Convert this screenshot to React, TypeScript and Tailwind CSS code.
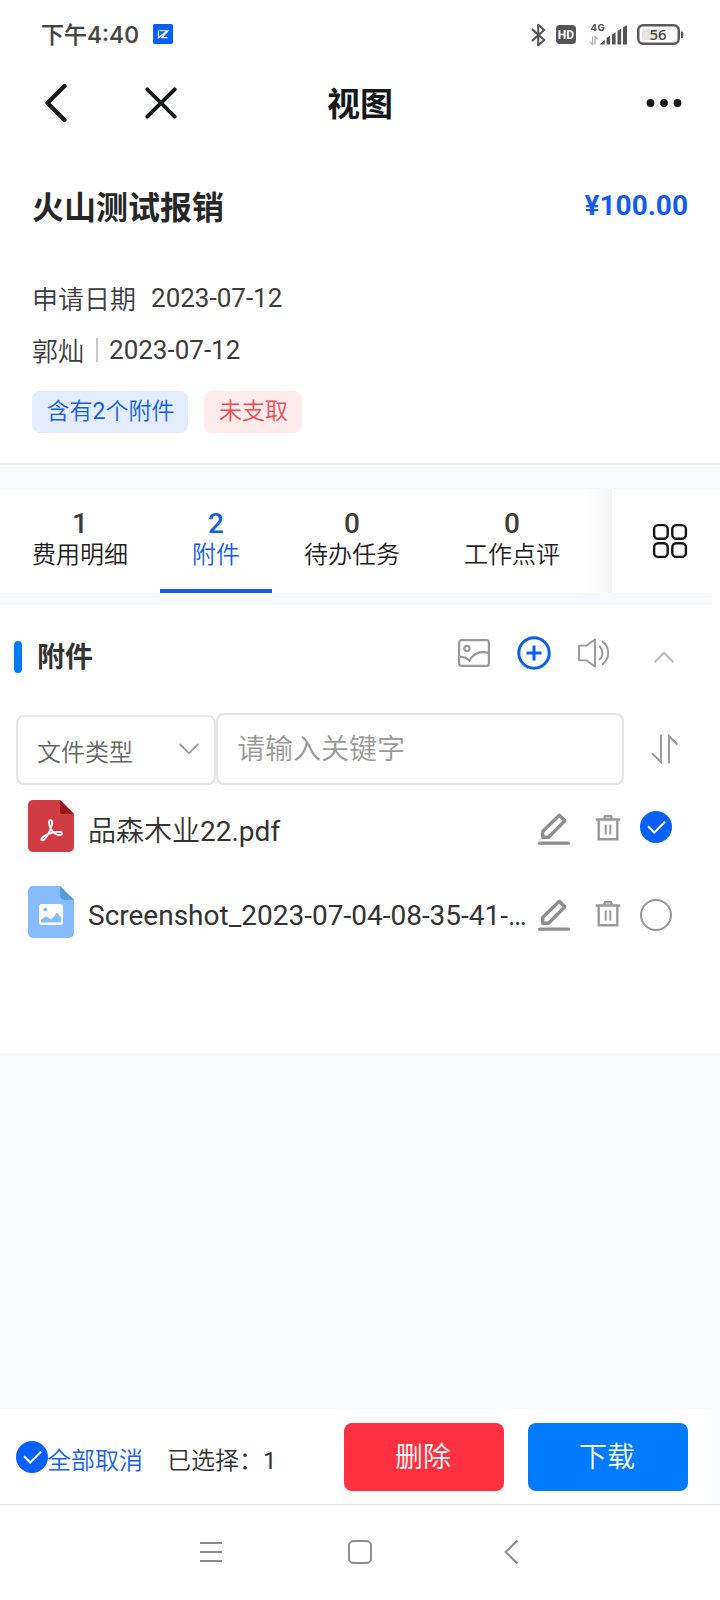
import type { ReactNode } from "react";

function BluetoothIcon() {
  return (
    <svg width="16" height="24" viewBox="0 0 16 24" fill="none" stroke="#555" strokeWidth="2.1" strokeLinejoin="round" strokeLinecap="round">
      <path d="M1.6 6.6 13.2 17 7.2 22.200V1.800L13.200 7 1.6 17.4" />
    </svg>
  );
}

function SignalIcon() {
  return (
    <svg width="40" height="26" viewBox="0 -2 40 26">
      <text x="1.5" y="7.6" fontSize="9.5" fontWeight="700" fill="#4a4a4a" fontFamily="Inter, sans-serif" letterSpacing="0.6">4G</text>
      <g stroke="#b0b0b0" strokeWidth="1.3" fill="none">
        <path d="M3.6 13.5v8L.7 18.6M6 21.5v-8l2.6 2.8" />
      </g>
      <g fill="#555">
        <path d="M10.5 21.500 15.700 17v4.500zM17.500 15l3.600-2.400v8.900h-3.600zM23 11.600l3.600-2.200v12.100H23zM28.500 8l3.600-2.400v15.900h-3.600zM34 4.600l4-2.600v19.500h-4z" />
      </g>
    </svg>
  );
}

function BatteryIcon() {
  return (
    <svg width="47" height="22" viewBox="0 0 47 22">
      <rect x="1.250" y="1.250" width="40.500" height="18.500" rx="5" fill="#fff" stroke="#5a5a5a" strokeWidth="2.500" />
      <rect x="5" y="5" width="19" height="11" rx="2" fill="#e4e4e4" />
      <path d="M44 7.500h.800a1.500 1.500 0 0 1 1.500 1.500v3.500a1.500 1.500 0 0 1-1.500 1.500H44z" fill="#5a5a5a" />
      <text x="21" y="15.800" fontSize="15" fontWeight="500" fill="#444" textAnchor="middle" fontFamily="Noto Sans, sans-serif">56</text>
    </svg>
  );
}

function AppBadge() {
  return (
    <svg width="20" height="20" viewBox="0 0 20 20">
      <rect width="20" height="20" rx="1.5" fill="#0a60ff" />
      <path d="M6.500 6.700h8.500L9 13.600h5.500M5.400 6.500v7.300l8-6.300M8.300 13.600l5.500-5.500" fill="none" stroke="#fff" strokeWidth="1.100" />
    </svg>
  );
}

function ImageIcon() {
  return (
    <svg width="32" height="28" viewBox="0 0 32 28" fill="none" stroke="#999" strokeWidth="2.200">
      <rect x="1.100" y="1.100" width="29.800" height="25.800" rx="2.500" />
      <circle cx="9" cy="9.400" r="2.600" />
      <path d="M1 17.800c4-.4 7 .4 10.300 3.800C15.500 14.500 22 11.500 31 14" />
    </svg>
  );
}

function PlusIcon() {
  return (
    <svg width="34" height="34" viewBox="0 0 34 34" fill="none" stroke="#0f5df0" strokeWidth="3">
      <circle cx="17" cy="17" r="15.200" />
      <path d="M17 9.500v15M9.500 17h15" />
    </svg>
  );
}

function SpeakerIcon() {
  return (
    <svg width="32" height="30" viewBox="0 0 32 30" fill="none" stroke="#999" strokeWidth="1.900">
      <path d="M1 7.600h7.500L17 1.500v27l-8.500-6.100H1z" strokeLinejoin="round" />
      <path d="M21.200 8.200c4.200 3 4.200 10.600 0 13.600M24 3.400c8.200 5 8.200 18.200 0 23.200" />
    </svg>
  );
}

function PencilIcon() {
  return (
    <svg width="32" height="32" viewBox="0 0 32 32" fill="none" stroke="#8e8e8e">
      <path d="M21.300 2.200 26.800 7.700 10.500 24.200H4.700V18.500Z" strokeWidth="3.400" strokeLinejoin="round" />
      <path d="M1.600 30.200h28.800" strokeWidth="3.200" strokeLinecap="round" />
    </svg>
  );
}

function TrashIcon() {
  return (
    <svg width="26" height="26" viewBox="0 0 26 26" fill="none" stroke="#999" strokeWidth="2.400">
      <path d="M.700 4.500h24.600M3.700 4.500v19.800h18.600V4.500M9 4.500l1-3.200h6l1 3.200" />
      <path d="M10.700 9.500v10M15.300 9.500v10" strokeWidth="2" />
    </svg>
  );
}

function CheckCircle() {
  return (
    <svg width="32" height="32" viewBox="0 0 32 32">
      <circle cx="16" cy="16" r="16" fill="#0560ff" />
      <path d="M8 15.300 14.200 21.500 25 10.800" fill="none" stroke="#fff" strokeWidth="2" />
    </svg>
  );
}

function EmptyCircle() {
  return (
    <svg width="32" height="32" viewBox="0 0 32 32">
      <circle cx="16" cy="16" r="15" fill="none" stroke="#969696" strokeWidth="2" />
    </svg>
  );
}

function PdfFile() {
  return (
    <svg width="46" height="52" viewBox="0 0 46 52">
      <path d="M5 0h27l14 14v33a5 5 0 0 1-5 5H5a5 5 0 0 1-5-5V5a5 5 0 0 1 5-5z" fill="#d13b43" />
      <path d="M32 0l14 14H34a2 2 0 0 1-2-2z" fill="#9b1419" />
      <path d="M22.700 20.200c-2.700 0-1.900 5 .200 8.800 2.200 4 6 6.200 9 6 2.700-.2 2.800-2.800 0-3.100-4.600-.4-11 1.600-15.300 4-3.600 2-3.900 4.700-2.200 4.500 2.600-.4 6.700-7.400 8.500-12.200 1.300-3.700 2-8-.200-8z" fill="none" stroke="#fff" strokeWidth="1.900" />
    </svg>
  );
}

function PictureFile() {
  return (
    <svg width="46" height="52" viewBox="0 0 46 52">
      <path d="M5 0h27l14 14v33a5 5 0 0 1-5 5H5a5 5 0 0 1-5-5V5a5 5 0 0 1 5-5z" fill="#86bcff" />
      <path d="M32 0l14 14H37a5 5 0 0 1-5-5z" fill="#529ddd" />
      <rect x="11" y="18" width="24" height="21" rx="2.500" fill="#fff" />
      <circle cx="17.300" cy="23.500" r="1.900" fill="#86bcff" />
      <path d="M13 36.500v-3l5-3.300 5.200 3.400 5.800-7 4 4.200v5.700z" fill="#86bcff" />
    </svg>
  );
}

function Tab({ count, label, active }: { count: number; label: string; active?: boolean }) {
  return (
    <div className={active ? "relative flex h-full shrink-0 flex-col items-center px-8 pt-[19px] text-[#125de6]" : "flex h-full shrink-0 flex-col items-center px-8 pt-[19px] text-[#1c1c1c]"}>
      <span className={active ? "text-[28px] leading-[32px] font-medium" : "text-[28px] leading-[32px] font-medium text-[#3c3c3c]"}>{count}</span>
      <span className="mt-px text-2xl leading-[28px] font-[350]">{label}</span>
      {active && <span className="absolute bottom-0 left-0 h-1 w-full bg-[#125de0]" />}
    </div>
  );
}

function FileRow({ icon, name, check, nameClass, checkClass }: { icon: ReactNode; name: ReactNode; check: ReactNode; nameClass: string; checkClass: string }) {
  return (
    <div className="flex h-[86px] items-start pl-7">
      {icon}
      <span className={nameClass}>{name}</span>
      <div className="mt-[13px] ml-[10px] flex items-start">
        <PencilIcon />
        <span className="mt-[2px] ml-[25px]"><TrashIcon /></span>
        <span className={checkClass}>{check}</span>
      </div>
    </div>
  );
}

export default function App() {
  return (
    <div className="flex h-[1600px] w-[720px] flex-col overflow-hidden bg-white font-['Roboto','Noto_Sans_CJK_SC',sans-serif] [&_svg]:block [&_svg]:shrink-0">
      <div className="flex h-[69px] items-center pr-[36px] pl-[41px]">
        <span className="font-['Inter','Noto_Sans_CJK_SC',sans-serif] text-[23px] leading-[32px] font-medium text-[#444] [-webkit-text-stroke:0.2px_#444]">下午4:40</span>
        <span className="ml-[14px] mb-px"><AppBadge /></span>
        <div className="ml-auto flex items-center">
          <BluetoothIcon />
          <span className="ml-[9px] flex h-[19px] w-[20px] items-center justify-center rounded bg-[#555] text-[12px] font-bold text-white">HD</span>
          <span className="mb-[2px] ml-[13px]"><SignalIcon /></span>
          <span className="ml-[8px]"><BatteryIcon /></span>
        </div>
      </div>

      <div className="flex h-[69px] items-center pr-[38px] pb-[2px] pl-[45px]">
        <svg width="22" height="38" viewBox="0 0 22 38" fill="none" stroke="#16191c" strokeWidth="4.200" strokeLinecap="round" strokeLinejoin="round">
          <path d="M19.500 2.100 2.500 19 19.500 35.900" />
        </svg>
        <svg className="ml-[78px]" width="32" height="32" viewBox="0 0 32 32" fill="none" stroke="#16191c" strokeWidth="3.800" strokeLinecap="round">
          <path d="M2.300 2.300 29.700 29.700M29.700 2.300 2.300 29.700" />
        </svg>
        <h1 className="mt-[5px] ml-[150px] text-[33px] leading-[44px] font-bold text-[#16191c]">视图</h1>
        <svg className="ml-auto" width="36" height="8" viewBox="0 0 36 8" fill="#16191c">
          <circle cx="4.500" cy="4" r="3.900" />
          <circle cx="18" cy="4" r="3.900" />
          <circle cx="31.500" cy="4" r="3.900" />
        </svg>
      </div>

      <section className="h-[327px] border-b-2 border-[#edf0f1] px-8 pt-[46px]">
        <div className="flex h-[44px] items-center justify-between">
          <h2 className="mt-[3px] text-[32px] leading-[44px] font-bold text-[#262626]">火山测试报销</h2>
          <span className="text-[28px] leading-[44px] font-bold text-[#125df0]">¥100.00</span>
        </div>
        <div className="mt-[51px] flex h-[40px] items-start text-[26px] leading-[40px] text-[#3c3c3c]">
          <span className="mt-px font-[350]">申请日期</span>
          <span className="-mt-px ml-[15px]">2023-07-12</span>
        </div>
        <div className="mt-3 flex h-[40px] items-start text-[26px] leading-[40px] text-[#3c3c3c]">
          <span className="mt-px font-[350]">郭灿</span>
          <span className="mt-[7px] ml-3 h-6 w-[2px] bg-[#c8c9cc]" />
          <span className="-mt-px ml-[11px]">2023-07-12</span>
        </div>
        <div className="mt-5 flex gap-4 text-[23px] leading-[42px] font-[350]">
          <span className="h-[42px] w-[156px] rounded-lg bg-[#e3edff] pl-[14.500px] whitespace-nowrap text-[#125de6]">含有<span className="font-normal">2</span>个附件</span>
          <span className="h-[42px] w-[98px] rounded-lg bg-[#ffebec] pl-[15px] whitespace-nowrap text-[#f04c4c]">未支取</span>
        </div>
      </section>

      <div className="mt-[2px] h-[22px] shrink-0 bg-[#f7f9fe]" />

      <nav className="flex h-[104px] shrink-0">
        <div className="relative flex w-[612px] overflow-hidden">
          <Tab count={1} label="费用明细" />
          <Tab count={2} label="附件" active />
          <Tab count={0} label="待办任务" />
          <Tab count={0} label="工作点评" />
          <span className="absolute top-0 right-0 h-full w-7 bg-gradient-to-r from-white via-[#fcfcfc] to-[#f4f4f4]" />
        </div>
        <div className="flex flex-1 items-center justify-center pl-[8px]">
          <svg width="36" height="36" viewBox="0 0 36 36" fill="none" stroke="#161616" strokeWidth="2.400">
            <rect x="2.100" y="2.100" width="13.600" height="13.600" rx="4" />
            <rect x="20.300" y="2.100" width="13.600" height="13.600" rx="4" />
            <rect x="2.100" y="20.300" width="13.600" height="13.600" rx="4" />
            <rect x="20.300" y="20.300" width="13.600" height="13.600" rx="4" />
          </svg>
        </div>
      </nav>

      <div className="mr-2 h-3 shrink-0 bg-[#f7f9fe]" />

      <section className="h-[448px] shrink-0">
        <div className="flex h-[108px] items-start pt-[28px] pl-[14px]">
          <span className="mt-2 h-8 w-2 rounded bg-[#007aff]" />
          <h3 className="mt-[5px] ml-[15px] text-[28px] leading-[40px] font-bold text-[#333]">附件</h3>
          <span className="mt-[6px] ml-[365px]"><ImageIcon /></span>
          <span className="mt-[3px] ml-[27px]"><PlusIcon /></span>
          <span className="mt-[5px] ml-[27px]"><SpeakerIcon /></span>
          <svg className="mt-[18px] ml-[44px]" width="20" height="12" viewBox="0 0 20 12" fill="none" stroke="#bcbcbc" strokeWidth="2">
            <path d="M.700 11.300 10 1.700l9.300 9.600" />
          </svg>
        </div>
        <div className="flex h-[72px] items-end pl-4">
          <div className="flex h-[70px] w-[200px] items-center rounded-lg border-2 border-[#e5e5e5] pr-[15px] pl-[19px]">
            <span className="mt-[5px] text-2xl leading-[34px] font-[350] text-[#666]">文件类型</span>
            <svg className="mb-[2px] ml-auto" width="20" height="12" viewBox="0 0 20 12" fill="none" stroke="#999" strokeWidth="1.800">
              <path d="M.700 1 10 10.300 19.300 1" />
            </svg>
          </div>
          <div className="flex h-[72px] w-[408px] items-center rounded-lg border-2 border-[#e5e5e5] pl-[19px]">
            <span className="mt-[2px] text-[28px] leading-[40px] font-[350] text-[#999]">请输入关键字</span>
          </div>
          <svg className="mb-[21px] ml-[27px]" width="27" height="30" viewBox="0 0 27 30" fill="none" stroke="#999" strokeWidth="1.900">
            <path d="M10 .500v27.500L1 19.500M18 29.500V2l8.300 8.500" />
          </svg>
        </div>
        <div className="pt-[15px]">
          <FileRow icon={<PdfFile />} name={<>品森木业<span className="font-normal">22.pdf</span></>} check={<CheckCircle />} nameClass="mt-[15px] ml-[14px] w-[440px] whitespace-nowrap text-[28px] leading-[34px] font-[350] text-[#333]" checkClass="-mt-[2px] ml-[19px]" />
          <FileRow icon={<PictureFile />} name="Screenshot_2023-07-04-08-35-41-…" check={<EmptyCircle />} nameClass="mt-[13px] ml-[14px] w-[440px] whitespace-nowrap text-[28px] leading-[34px] text-[#333]" checkClass="ml-[19px]" />
        </div>
      </section>

      <div className="flex-1 bg-[#f7f9fe]" />

      <div className="h-[95px] shrink-0 bg-[#f7f9fe] pr-2">
        <div className="flex h-full items-start bg-white pl-4 font-[350]">
          <span className="mt-8"><CheckCircle /></span>
          <span className="mt-[35px] -ml-px text-2xl leading-[34px] text-[#1b60ea]">全部取消</span>
          <span className="mt-[35px] ml-6 text-2xl leading-[34px] text-[#333]">已选择：<span className="font-normal">1</span></span>
          <button className="mt-[14px] mr-6 ml-auto h-[68px] w-40 rounded-lg bg-[#ff3141] pt-[2px] pr-[2px] text-[28px] leading-[66px] text-white">删除</button>
          <button className="mt-[14px] mr-6 h-[68px] w-40 rounded-lg bg-[#007aff] pt-[2px] pr-[2px] text-[28px] leading-[66px] text-white">下载</button>
        </div>
      </div>

      <div className="flex h-[96px] shrink-0 items-center border-t border-[#e0e2e6] pb-[2px] pl-[200px]">
        <svg width="22" height="20" viewBox="0 0 22 20" stroke="#8c8c8c" strokeWidth="1.800">
          <path d="M0 1h22M0 10h22M0 19h22" />
        </svg>
        <svg className="ml-[126px]" width="24" height="24" viewBox="0 0 24 24" fill="none" stroke="#8c8c8c" strokeWidth="1.900">
          <rect x="1" y="1" width="22" height="22" rx="4.500" />
        </svg>
        <svg className="ml-[132px]" width="14" height="24" viewBox="0 0 14 24" fill="none" stroke="#8c8c8c" strokeWidth="2">
          <path d="M13.400.500 1.700 12l11.700 11.500" />
        </svg>
      </div>
    </div>
  );
}
